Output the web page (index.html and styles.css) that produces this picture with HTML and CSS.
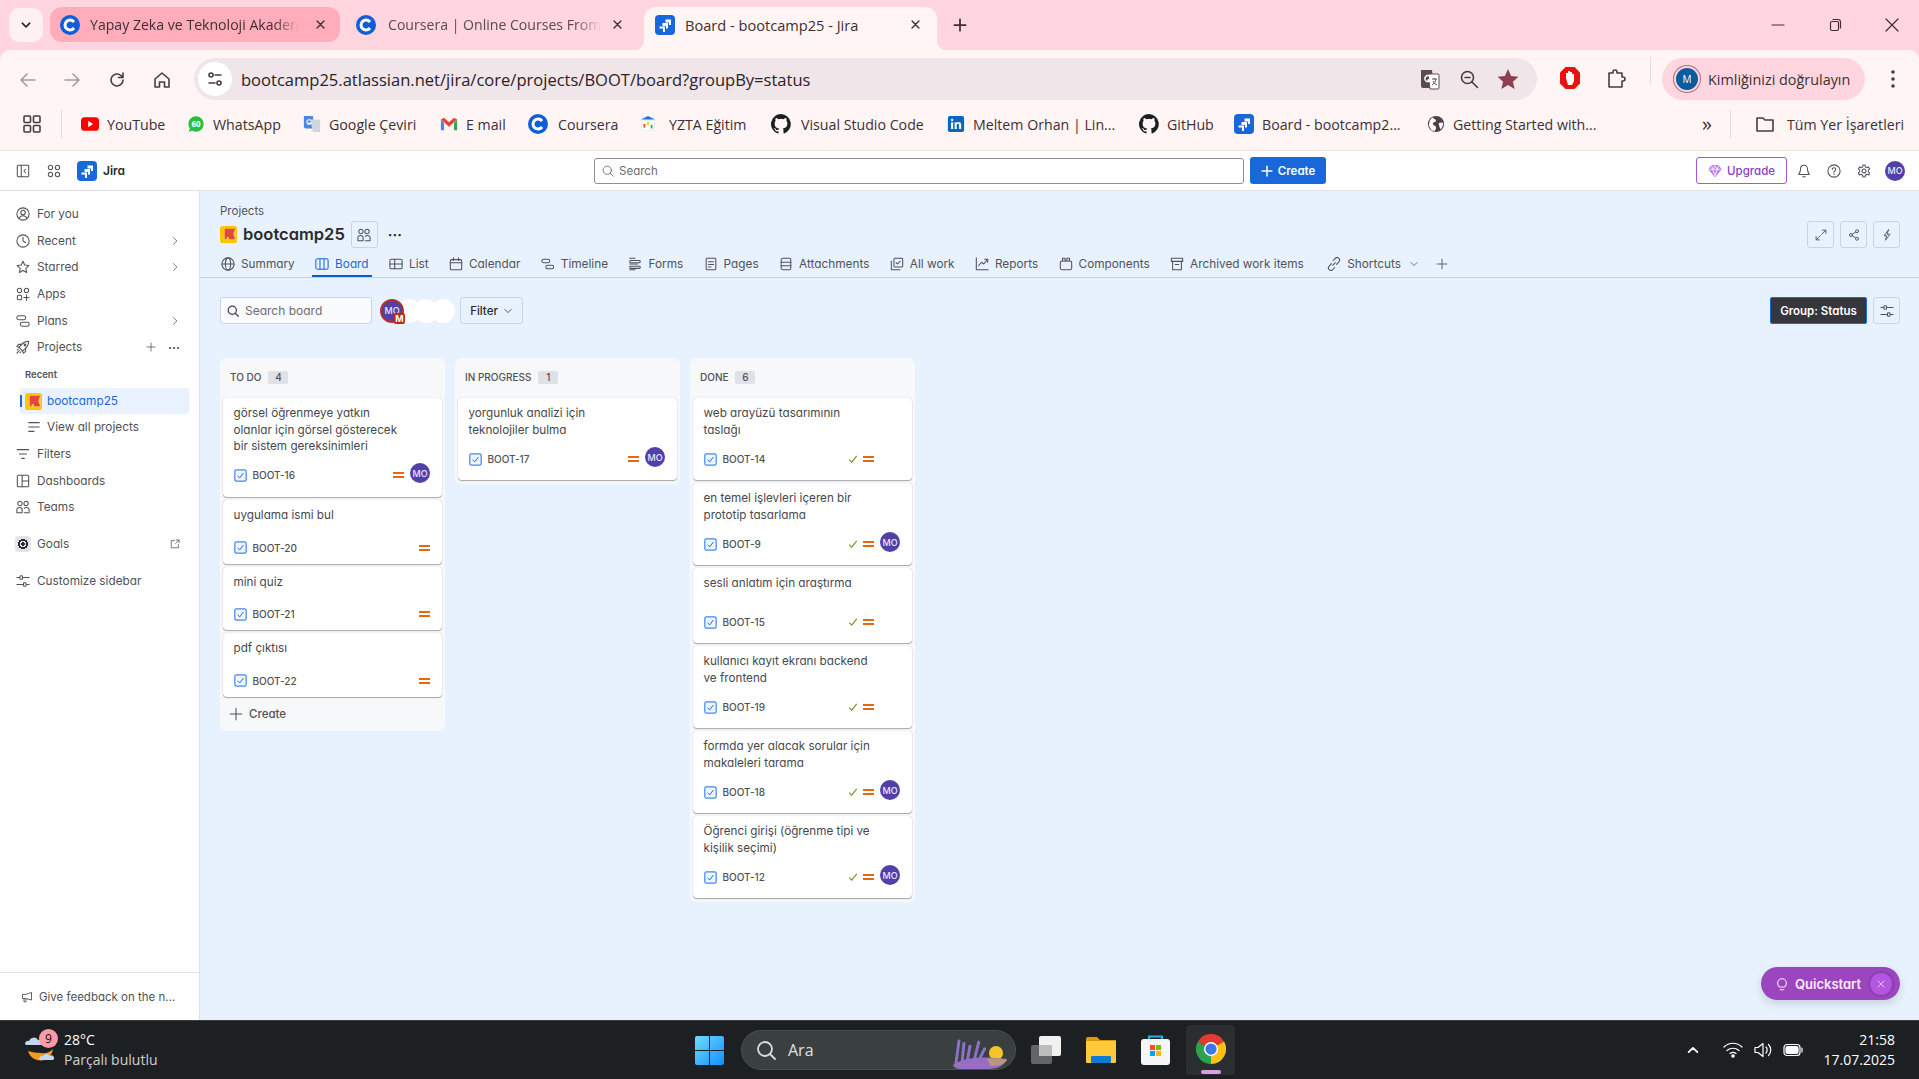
FILE: index.html
```html
<!DOCTYPE html>
<html lang="tr">
<head>
<meta charset="utf-8">
<title>Board - bootcamp25 - Jira</title>
<link rel="stylesheet" href="styles.css">
</head>
<body>
<svg class="defs" width="0" height="0" aria-hidden="true">
  <defs>
    <symbol id="i-user" viewBox="0 0 16 16"><circle cx="8" cy="8" r="7"/><circle cx="8" cy="6.3" r="2.6"/><path d="M3.6 13c.8-2.2 2.4-3 4.4-3s3.6.8 4.4 3"/></symbol>
    <symbol id="i-clock" viewBox="0 0 16 16"><circle cx="8" cy="8" r="7"/><path d="M8 3.8V8l3 1.8"/></symbol>
    <symbol id="i-star" viewBox="0 0 16 16"><path d="M8 1.5l2 4.3 4.7.6-3.500 3.200.9 4.700L8 12l-4.100 2.300.9-4.700L1.300 6.400 6 5.800z"/></symbol>
    <symbol id="i-apps" viewBox="0 0 16 16"><rect x="1.5" y="1.5" width="5" height="5" rx="2.5"/><rect x="9.5" y="1.5" width="5" height="5" rx="2.5"/><rect x="1.5" y="9.5" width="5" height="5" rx="1.5"/><path d="M12 9v6M9 12h6"/></symbol>
    <symbol id="i-plans" viewBox="0 0 16 16"><rect x="1" y="2" width="10" height="4.500" rx="2"/><rect x="5" y="9.500" width="10" height="4.500" rx="2"/></symbol>
    <symbol id="i-rocket" viewBox="0 0 16 16"><path d="M5.5 10.500L3.500 8.500l3-3.500c2.200-2.500 5-3.500 8-3.500 0 3-1 5.800-3.500 8l-3.500 3z"/><path d="M6.500 5H3L1 7.500l2.500 1M11 9.500V13l-2.500 2-1-2.500M1 15l3-3M1.500 11.500l1-1M4.500 14.500l1-1"/><circle cx="10.3" cy="5.7" r="1"/></symbol>
    <symbol id="i-chev" viewBox="0 0 16 16"><path d="M5.5 2.500L11 8l-5.500 5.500"/></symbol>
    <symbol id="i-chevd" viewBox="0 0 16 16"><path d="M3 5.500l5 5 5-5"/></symbol>
    <symbol id="i-plus" viewBox="0 0 16 16"><path d="M8 1.500v13M1.500 8h13"/></symbol>
    <symbol id="i-lines" viewBox="0 0 16 16"><path d="M2 3h12M2 8h12M2 13h6"/></symbol>
    <symbol id="i-filter" viewBox="0 0 16 16"><path d="M1.500 3h13M4 8h8M6.500 13h3"/></symbol>
    <symbol id="i-dash" viewBox="0 0 16 16"><rect x="1.5" y="1.5" width="13" height="13" rx="1.5"/><path d="M7 1.500v13M7 8h7.500"/></symbol>
    <symbol id="i-team" viewBox="0 0 16 16"><circle cx="4.5" cy="4" r="2.5"/><circle cx="11.5" cy="4" r="2.5"/><path d="M1 14.500V11c0-1.500 1.200-2.500 3-2.500 1.500 0 3 1 3 2.500v3.500zM9.500 14.500h5.500V11c0-1.500-1.200-2.500-3-2.500-1 0-2 .4-2.500 1"/></symbol>
    <symbol id="i-ext" viewBox="0 0 16 16"><path d="M7 2.500H2v11.500h11.500V9M9 7l5.500-5.500M10 1.500h4.500V6"/></symbol>
    <symbol id="i-sliders" viewBox="0 0 16 16"><path d="M1 4h3M8.500 4H15M1 12h6.500M12 12h3"/><rect x="4.5" y="2" width="3" height="4" rx="1"/><rect x="8.5" y="10" width="3" height="4" rx="1"/></symbol>
    <symbol id="i-mega" viewBox="0 0 16 16"><path d="M14 2.500v9.500L6 10H2V4.500h4zM4 10v4.500h2.500V10.500"/></symbol>
    <symbol id="i-globe" viewBox="0 0 16 16"><circle cx="8" cy="8" r="7"/><ellipse cx="8" cy="8" rx="3" ry="7"/><path d="M1 8h14"/></symbol>
    <symbol id="i-board" viewBox="0 0 16 16"><rect x="1" y="2" width="14" height="12" rx="2"/><path d="M5.7 2v12M10.3 2v12"/></symbol>
    <symbol id="i-list" viewBox="0 0 16 16"><rect x="1" y="2.5" width="14" height="11" rx="1.5"/><path d="M1 8h14M6.500 2.500v11"/></symbol>
    <symbol id="i-cal" viewBox="0 0 16 16"><rect x="1.5" y="3" width="13" height="11.5" rx="1.5"/><path d="M1.500 6.500h13M5 1v3M11 1v3"/></symbol>
    <symbol id="i-time" viewBox="0 0 16 16"><rect x="1" y="2.5" width="9" height="4" rx="2"/><rect x="5.5" y="9.5" width="9" height="4" rx="2"/></symbol>
    <symbol id="i-forms" viewBox="0 0 16 16"><path d="M2 1.500h6M2 8h9M2 14.500h6"/><rect x="2" y="4" width="12" height="2.5" rx="1"/><rect x="2" y="10.5" width="12" height="2.5" rx="1"/></symbol>
    <symbol id="i-page" viewBox="0 0 16 16"><rect x="2.5" y="1.5" width="11" height="13" rx="1"/><path d="M5 5.500h6M5 8.500h6M5 11.500h3"/></symbol>
    <symbol id="i-attach" viewBox="0 0 16 16"><rect x="2.5" y="1.5" width="11" height="13" rx="2"/><path d="M2.500 6h11M2.500 10h11"/></symbol>
    <symbol id="i-work" viewBox="0 0 16 16"><rect x="4.5" y="1.5" width="10" height="10" rx="1"/><path d="M1.500 4.500v10h10M7 6.500l1.500 1.500 3-3"/></symbol>
    <symbol id="i-report" viewBox="0 0 16 16"><path d="M1.500 1v13.500H15M4 10l3.500-4 2.500 2 4.500-5.500M11 2.500h3.500V6"/></symbol>
    <symbol id="i-comp" viewBox="0 0 16 16"><rect x="1.5" y="4.5" width="13" height="10" rx="2"/><path d="M4 4.500V1.500h3v3M9 4.500V1.500h3v3"/></symbol>
    <symbol id="i-arch" viewBox="0 0 16 16"><rect x="1.5" y="1.5" width="13" height="3.5"/><path d="M3 5v9.500h10V5M6 8.500h4"/></symbol>
    <symbol id="i-link" viewBox="0 0 16 16"><path d="M6.500 9.500l3-3M5 7.500l-2.500 3a2.800 2.800 0 0 0 4 4L9 12M7 4l2.500-2.500a2.800 2.800 0 0 1 4 4L11 8.500"/></symbol>
    <symbol id="i-expand" viewBox="0 0 16 16"><path d="M9 7l5.500-5.500M10 1.500h4.500V6M7 9l-5.500 5.500M6 14.500H1.500V10"/></symbol>
    <symbol id="i-share" viewBox="0 0 16 16"><circle cx="12" cy="3" r="2"/><circle cx="4" cy="8" r="2"/><circle cx="12" cy="13" r="2"/><path d="M5.800 7l4.400-3M5.800 9l4.400 3"/></symbol>
    <symbol id="i-bolt" viewBox="0 0 16 16"><path d="M10 1L4 9h3.500L6 15l6-8H8.500z"/></symbol>
    <symbol id="i-search" viewBox="0 0 16 16"><circle cx="7" cy="7" r="5.5"/><path d="M11 11l4 4"/></symbol>
    <symbol id="i-bell" viewBox="0 0 16 16"><path d="M8 1.500c-2.700 0-4 2-4 4.500 0 3-1.500 5-2 6h12c-.5-1-2-3-2-6 0-2.500-1.300-4.500-4-4.500zM6.500 14.500h3"/></symbol>
    <symbol id="i-help" viewBox="0 0 16 16"><circle cx="8" cy="8" r="7"/><path d="M6 6.200c0-1.200 1-2 2-2s2 .8 2 1.900c0 1.600-2 1.600-2 3.300M8 11.200v.8"/></symbol>
    <symbol id="i-gear" viewBox="0 0 16 16"><circle cx="8" cy="8" r="2.3"/><path d="M6.800 1.200h2.400l.4 2 1.800 1 1.900-.7 1.200 2.100-1.500 1.300v2.200l1.500 1.300-1.200 2.100-1.900-.7-1.800 1-.4 2H6.800l-.4-2-1.800-1-1.900.7-1.200-2.100 1.500-1.300V6.900L1.500 5.600l1.200-2.100 1.900.7 1.800-1z"/></symbol>
    <symbol id="i-panel" viewBox="0 0 16 16"><rect x="1.5" y="1.5" width="13" height="13" rx="1"/><path d="M6 1.500v13M11 6l-2 2 2 2"/></symbol>
    <symbol id="i-grid" viewBox="0 0 16 16"><circle cx="4" cy="4" r="2.5"/><circle cx="12" cy="4" r="2.5"/><circle cx="4" cy="12" r="2.5"/><circle cx="12" cy="12" r="2.5"/></symbol>
    <symbol id="i-tick" viewBox="0 0 16 16"><path d="M2 9l4 4 8-10"/></symbol>
    <symbol id="i-x" viewBox="0 0 16 16"><path d="M3 3l10 10M13 3L3 13"/></symbol>
    <symbol id="i-task" viewBox="0 0 16 16"><rect x="1" y="1" width="14" height="14" rx="2" fill="#eef5ff" stroke="#4688ec" stroke-width="1.5"/><path d="M4.500 8.300l2.500 2.700 4.500-6" fill="none" stroke="#1868db" stroke-width="1.2"/></symbol>
    <symbol id="logo-jira" viewBox="0 0 20 20"><rect width="20" height="20" rx="4" fill="#1868db"/><path d="M10.500 4.500H16v5.500h-2V7.500h-3.500zM7.500 8H13v5.500h-2V11H7.500zM4.500 11.500H10V17H8v-3.500H4.500z" fill="#fff"/></symbol>
    <symbol id="logo-c" viewBox="0 0 20 20"><circle cx="10" cy="10" r="10" fill="#0f5ed7"/><path d="M14 7a5 5 0 1 0 0 6" fill="none" stroke="#fff" stroke-width="3"/></symbol>
    <symbol id="logo-proj" viewBox="0 0 18 18"><rect width="18" height="18" rx="3" fill="#ffc400"/><rect x="4" y="3" width="13" height="12" fill="#f5cd47"/><path d="M5 3h11l-2 5.500 2 5.500H9.500v-2H7v2H5z" fill="#e2483d"/></symbol>
    <symbol id="logo-gh" viewBox="0 0 16 16"><path fill="#1b1f23" d="M8 0a8 8 0 0 0-2.500 15.600c.4.100.5-.2.500-.4v-1.400c-2.200.5-2.700-1-2.700-1-.4-.9-.9-1.200-.9-1.200-.7-.5.100-.5.100-.5.800.1 1.200.8 1.200.8.700 1.200 1.900.9 2.300.7.100-.5.300-.9.500-1.100-1.800-.2-3.600-.9-3.600-4 0-.9.300-1.600.8-2.100-.1-.2-.4-1 .1-2.100 0 0 .7-.2 2.200.8a7.600 7.600 0 0 1 4 0c1.500-1 2.200-.8 2.200-.8.400 1.100.2 1.900.1 2.100.5.600.8 1.300.8 2.100 0 3.100-1.900 3.700-3.700 3.900.3.300.6.800.6 1.500v2.200c0 .2.100.5.600.4A8 8 0 0 0 8 0z"/></symbol>
  </defs>
</svg>

<header class="chrome">
  <div class="tabstrip">
    <button class="tab-menu"><svg class="ic ic-12 ic-b2"><use href="#i-chevd"/></svg></button>
    <div class="tab tab-pink"><svg class="fav"><use href="#logo-c"/></svg><span class="tab-label">Yapay Zeka ve Teknoloji Akaden</span><svg class="ic ic-11 ic-b2 tab-x"><use href="#i-x"/></svg></div>
    <div class="tab tab-plain"><svg class="fav"><use href="#logo-c"/></svg><span class="tab-label">Coursera | Online Courses From</span><svg class="ic ic-11 ic-b2 tab-x"><use href="#i-x"/></svg></div>
    <div class="tab tab-active"><svg class="fav"><use href="#logo-jira"/></svg><span class="tab-title">Board - bootcamp25 - Jira</span><svg class="ic ic-11 ic-b2 tab-x"><use href="#i-x"/></svg></div>
    <svg class="ic ic-14 ic-b2 new-tab"><use href="#i-plus"/></svg>
    <div class="win-ctrls">
      <svg class="ic ic-14" viewBox="0 0 14 14"><path d="M1 7h12"/></svg>
      <svg class="ic ic-14" viewBox="0 0 14 14"><rect x="2.5" y="3.5" width="8" height="9" rx="1.5"/><path d="M5 1.500h5c1.500 0 2.500 1 2.500 2.500v6"/></svg>
      <svg class="ic ic-14" viewBox="0 0 14 14"><path d="M1 1l12 12M13 1L1 13"/></svg>
    </div>
  </div>
  <div class="toolbar">
    <div class="addr-row">
      <svg class="ic ic-18 ic-faded nav-btn" viewBox="0 0 18 18"><path d="M16 9H2M8 3L2 9l6 6"/></svg>
      <svg class="ic ic-18 ic-faded nav-btn" viewBox="0 0 18 18"><path d="M2 9h14M10 3l6 6-6 6"/></svg>
      <svg class="ic ic-18 ic-dark nav-btn" viewBox="0 0 18 18"><path d="M15 9a6 6 0 1 1-2-4.500L15 6.500M15 2v4.500h-4.500"/></svg>
      <svg class="ic ic-18 ic-dark nav-btn" viewBox="0 0 18 18"><path d="M2 8l7-6 7 6v8h-4.500v-5h-5v5H2z"/></svg>
      <div class="omnibox">
        <span class="site-chip"><svg class="ic ic-16 ic-dark" viewBox="0 0 16 16"><circle cx="4" cy="4" r="2"/><path d="M8 4h6M2 12h6"/><circle cx="12" cy="12" r="2"/></svg></span>
        <span class="url">bootcamp25.atlassian.net/jira/core/projects/BOOT/board?groupBy=status</span>
        <span class="omni-right">
          <svg class="omni-ic" viewBox="0 0 22 22"><path d="M2 2h11l2 18H4a2 2 0 0 1-2-2z" fill="#5b4a4e"/><path d="M9 6h10a1 1 0 0 1 1 1v13a1 1 0 0 1-1 1H11z" fill="#fff" stroke="#5b4a4e"/><path d="M11 8.500a3 3 0 1 0 .5 3.500H8.500" fill="none" stroke="#fff" stroke-width="1.5"/><path d="M13 11h5M15.500 10v1M17 11c-.5 3-2 5-4 6M14 13c.8 2 2.300 3 4 4" fill="none" stroke="#5b4a4e"/></svg>
          <svg class="ic ic-20 ic-dark" viewBox="0 0 20 20"><circle cx="8.5" cy="8.5" r="6"/><path d="M13 13l5.500 5.500M6 8.500h5"/></svg>
          <svg class="omni-star" viewBox="0 0 20 20"><path d="M10 1l2.800 6.300 6.700.6-5 4.500 1.500 6.600-6-3.500-6 3.500 1.500-6.600-5-4.500 6.700-.6z" fill="#8e3f50"/></svg>
        </span>
      </div>
      <svg class="ext-stop" viewBox="0 0 22 24"><path d="M6.500 1h9L21 6.500v11L15.500 23h-9L1 17.500v-11z" fill="#e8120e"/><path d="M7 12V7h2v4-6h2v6-5h2v5-3h2v7l-2 4H9z" fill="#fff"/></svg>
      <svg class="ic ic-20 ic-dark ext-puzzle" viewBox="0 0 20 20"><path d="M3 4h4V3a2 2 0 0 1 4 0v1h5v4h1a2 2 0 0 1 0 4h-1v6H3z"/></svg>
      <span class="vsep vsep-a"></span>
      <div class="profile"><span class="profile-av">M</span><span>Kimliğinizi doğrulayın</span></div>
      <svg class="kebab" viewBox="0 0 4 18"><circle cx="2" cy="2" r="1.8"/><circle cx="2" cy="9" r="1.8"/><circle cx="2" cy="16" r="1.8"/></svg>
    </div>
    <nav class="bookmarks">
      <svg class="ic ic-18 ic-dark bm-apps" viewBox="0 0 18 18"><rect x="1" y="1" width="6.5" height="6.5" rx="1"/><rect x="10.5" y="1" width="6.5" height="6.5" rx="1"/><rect x="1" y="10.5" width="6.5" height="6.5" rx="1"/><rect x="10.5" y="10.5" width="6.5" height="6.5" rx="1"/></svg>
      <span class="vsep bm-sep"></span>
      <a class="bm bm-yt"><svg class="fav-s" viewBox="0 0 20 20"><rect y="2.5" width="20" height="15" rx="4" fill="#f00"/><path d="M8 6.500l5.500 3.500L8 13.500z" fill="#fff"/></svg>YouTube</a>
      <a class="bm bm-wa"><svg class="fav-s" viewBox="0 0 20 20"><circle cx="10" cy="10" r="8.5" fill="#25c03f"/><path d="M2 19l1.500-5 3 3z" fill="#25c03f"/></svg><span class="wa-60">60</span>WhatsApp</a>
      <a class="bm bm-gt"><svg class="fav-s" viewBox="0 0 20 20"><path d="M1 1h10l2 14H3a2 2 0 0 1-2-2z" fill="#4a86e8"/><path d="M8 5h10a1 1 0 0 1 1 1v12a1 1 0 0 1-1 1h-7z" fill="#cfd8dc"/><path d="M8.500 6a2.500 2.500 0 1 0 .5 3H6" fill="none" stroke="#fff" stroke-width="1.2"/></svg>Google Çeviri</a>
      <a class="bm bm-gm"><svg class="fav-s" viewBox="0 0 20 20"><path d="M1 5v12h3.500V9z" fill="#4285f4"/><path d="M19 5v12h-3.500V9z" fill="#34a853"/><path d="M1 5l3.500-2L10 8l5.500-5L19 5l-9 8z" fill="#ea4335"/></svg>E mail</a>
      <a class="bm bm-co"><svg class="fav-l"><use href="#logo-c"/></svg>Coursera</a>
      <a class="bm bm-yz"><svg class="fav-s" viewBox="0 0 20 20"><path d="M10 1l8 4H2z" fill="#1a73e8"/><rect x="3" y="6" width="14" height="11" fill="#fff" stroke="#e8eaed"/><rect x="5" y="10" width="2" height="4" fill="#ea4335"/><rect x="9" y="8" width="2" height="3" fill="#fbbc04"/><rect x="13" y="11" width="2" height="4" fill="#34a853"/></svg>YZTA Eğitim</a>
      <a class="bm bm-vs"><svg class="fav-l"><use href="#logo-gh"/></svg>Visual Studio Code</a>
      <a class="bm bm-li"><svg class="fav-s" viewBox="0 0 20 20"><rect x="1" y="1" width="18" height="18" rx="2" fill="#0a66c2"/><path d="M4.500 8h2.300v7.500H4.500zM4.400 5.500a1.300 1.300 0 1 1 2.600 0 1.300 1.300 0 0 1-2.600 0zM8.500 8h2.200v1c.5-.8 1.300-1.200 2.300-1.200 2 0 2.700 1.300 2.700 3.300v4.400h-2.300v-4c0-1-.3-1.700-1.200-1.700-1 0-1.400.7-1.400 1.700v4H8.500z" fill="#fff"/></svg>Meltem Orhan | Lin...</a>
      <a class="bm bm-gh"><svg class="fav-l"><use href="#logo-gh"/></svg>GitHub</a>
      <a class="bm bm-bo"><svg class="fav-l"><use href="#logo-jira"/></svg>Board - bootcamp2...</a>
      <a class="bm bm-gs"><svg class="fav-s" viewBox="0 0 20 20"><circle cx="10" cy="10" r="9" fill="#4a4046"/><path d="M6 2.500c1 2 3.500 1.500 4 3.500s-3 1.500-3.500 3.500 3 2 3.500 4-1 3-1.500 4.500L5 17 2 12l1-6zM13 9c2-1 4-1 5 0 0 3-1 5-3 7-1-2-2-5-2-7z" fill="#fff5f5"/></svg>Getting Started with...</a>
      <span class="bm-more">»</span>
      <span class="vsep bm-sep2"></span>
      <a class="bm bm-all"><svg class="ic ic-20 ic-dark" viewBox="0 0 20 20"><path d="M2 4h6l2 2h8v11H2z"/></svg>Tüm Yer İşaretleri</a>
    </nav>
  </div>
</header>

<div class="jira">
  <div class="topnav">
    <svg class="ic ic-14 tn-panel"><use href="#i-panel"/></svg>
    <svg class="ic ic-14 tn-grid"><use href="#i-grid"/></svg>
    <svg class="jira-logo"><use href="#logo-jira"/></svg>
    <span class="jira-word">Jira</span>
    <div class="global-search"><svg class="ic ic-12"><use href="#i-search"/></svg><span>Search</span></div>
    <button class="create-btn"><svg class="ic ic-12 ic-white ic-b2"><use href="#i-plus"/></svg>Create</button>
    <button class="upgrade-btn"><svg class="gem" viewBox="0 0 16 16"><path d="M4 2h8l3 4-7 8.500L1 6z" fill="#c58af0" stroke="#af59e1"/><path d="M1 6h14M5.500 6L8 14l2.500-8M4 2l1.500 4L8 2l2.500 4L12 2" fill="none" stroke="#fff" stroke-width=".8"/></svg>Upgrade</button>
    <svg class="ic ic-14 tn-i tn-bell"><use href="#i-bell"/></svg>
    <svg class="ic ic-14 tn-i"><use href="#i-help"/></svg>
    <svg class="ic ic-14 tn-i"><use href="#i-gear"/></svg>
    <span class="avatar tn-av">MO</span>
  </div>

  <div class="workspace">
    <aside class="sidebar">
      <a class="side-item"><svg class="ic ic-14"><use href="#i-user"/></svg><span class="side-text">For you</span></a>
      <a class="side-item"><svg class="ic ic-14"><use href="#i-clock"/></svg><span class="side-text">Recent</span><svg class="ic ic-10 side-chev"><use href="#i-chev"/></svg></a>
      <a class="side-item"><svg class="ic ic-14"><use href="#i-star"/></svg><span class="side-text">Starred</span><svg class="ic ic-10 side-chev"><use href="#i-chev"/></svg></a>
      <a class="side-item"><svg class="ic ic-14"><use href="#i-apps"/></svg><span class="side-text">Apps</span></a>
      <a class="side-item"><svg class="ic ic-14"><use href="#i-plans"/></svg><span class="side-text">Plans</span><svg class="ic ic-10 side-chev"><use href="#i-chev"/></svg></a>
      <a class="side-item"><svg class="ic ic-14"><use href="#i-rocket"/></svg><span class="side-text">Projects</span><svg class="ic ic-10 side-plus"><use href="#i-plus"/></svg><span class="side-dots">···</span></a>
      <div class="side-label">Recent</div>
      <a class="side-project"><svg class="proj-ic"><use href="#logo-proj"/></svg><span>bootcamp25</span></a>
      <a class="side-item side-sub"><svg class="ic ic-14"><use href="#i-lines"/></svg><span class="side-text">View all projects</span></a>
      <a class="side-item"><svg class="ic ic-14"><use href="#i-filter"/></svg><span class="side-text">Filters</span></a>
      <a class="side-item"><svg class="ic ic-14"><use href="#i-dash"/></svg><span class="side-text">Dashboards</span></a>
      <a class="side-item"><svg class="ic ic-14"><use href="#i-team"/></svg><span class="side-text">Teams</span></a>
      <a class="side-item side-gap"><span class="goal-ic"></span><span class="side-text">Goals</span><svg class="ic ic-10 side-ext"><use href="#i-ext"/></svg></a>
      <a class="side-item side-gap"><svg class="ic ic-14"><use href="#i-sliders"/></svg><span class="side-text">Customize sidebar</span></a>
      <div class="side-feedback"><svg class="ic ic-12"><use href="#i-mega"/></svg><span>Give feedback on the n...</span></div>
    </aside>

    <main class="main">
      <div class="crumb">Projects</div>
      <div class="title-row">
        <svg class="title-ic"><use href="#logo-proj"/></svg>
        <h1 class="title">bootcamp25</h1>
        <button class="sq-btn"><svg class="ic ic-14"><use href="#i-team"/></svg></button>
        <span class="title-dots">···</span>
        <div class="title-actions">
          <button class="sq-btn sq-narrow"><svg class="ic ic-12"><use href="#i-expand"/></svg></button>
          <button class="sq-btn sq-narrow"><svg class="ic ic-12"><use href="#i-share"/></svg></button>
          <button class="sq-btn sq-narrow"><svg class="ic ic-12"><use href="#i-bolt"/></svg></button>
        </div>
      </div>
      <nav class="tabs">
        <a class="jtab"><svg class="ic ic-14"><use href="#i-globe"/></svg>Summary</a>
        <a class="jtab jtab-on"><svg class="ic ic-14"><use href="#i-board"/></svg>Board</a>
        <a class="jtab"><svg class="ic ic-14"><use href="#i-list"/></svg>List</a>
        <a class="jtab"><svg class="ic ic-14"><use href="#i-cal"/></svg>Calendar</a>
        <a class="jtab"><svg class="ic ic-14"><use href="#i-time"/></svg>Timeline</a>
        <a class="jtab"><svg class="ic ic-14"><use href="#i-forms"/></svg>Forms</a>
        <a class="jtab"><svg class="ic ic-14"><use href="#i-page"/></svg>Pages</a>
        <a class="jtab"><svg class="ic ic-14"><use href="#i-attach"/></svg>Attachments</a>
        <a class="jtab"><svg class="ic ic-14"><use href="#i-work"/></svg>All work</a>
        <a class="jtab"><svg class="ic ic-14"><use href="#i-report"/></svg>Reports</a>
        <a class="jtab"><svg class="ic ic-14"><use href="#i-comp"/></svg>Components</a>
        <a class="jtab"><svg class="ic ic-14"><use href="#i-arch"/></svg>Archived work items</a>
        <a class="jtab jtab-short"><svg class="ic ic-14"><use href="#i-link"/></svg>Shortcuts<svg class="ic ic-10 short-chev"><use href="#i-chevd"/></svg></a>
        <svg class="ic ic-12 tab-add"><use href="#i-plus"/></svg>
      </nav>

      <div class="board-tools">
        <div class="board-search"><svg class="ic ic-12 ic-dark"><use href="#i-search"/></svg><span>Search board</span></div>
        <div class="assignees">
          <span class="av-ring">MO<span class="av-m">M</span></span>
          <span class="av-blank"></span><span class="av-blank"></span><span class="av-blank"></span>
        </div>
        <button class="filter-btn">Filter<svg class="ic ic-10"><use href="#i-chevd"/></svg></button>
        <button class="group-btn">Group: Status</button>
        <button class="sq-btn sq-narrow sq-tool"><svg class="ic ic-14"><use href="#i-sliders"/></svg></button>
      </div>

      <section class="board">
        <div class="col">
          <div class="col-head"><span>TO DO</span><span class="count">4</span></div>
          <div class="cards">
            <article class="card card-3l"><p class="card-title">görsel öğrenmeye yatkın<br>olanlar için görsel gösterecek<br>bir sistem gereksinimleri</p><div class="card-foot"><svg class="task"><use href="#i-task"/></svg><span class="key">BOOT-16</span><i class="prio"></i><span class="avatar">MO</span></div></article>
            <article class="card card-1l"><p class="card-title">uygulama ismi bul</p><div class="card-foot"><svg class="task"><use href="#i-task"/></svg><span class="key">BOOT-20</span><i class="prio"></i></div></article>
            <article class="card card-1l"><p class="card-title">mini quiz</p><div class="card-foot"><svg class="task"><use href="#i-task"/></svg><span class="key">BOOT-21</span><i class="prio"></i></div></article>
            <article class="card card-1l"><p class="card-title">pdf çıktısı</p><div class="card-foot"><svg class="task"><use href="#i-task"/></svg><span class="key">BOOT-22</span><i class="prio"></i></div></article>
          </div>
          <div class="col-create"><svg class="ic ic-14"><use href="#i-plus"/></svg>Create</div>
        </div>
        <div class="col">
          <div class="col-head"><span>IN PROGRESS</span><span class="count">1</span></div>
          <div class="cards">
            <article class="card card-2l"><p class="card-title">yorgunluk analizi için<br>teknolojiler bulma</p><div class="card-foot"><svg class="task"><use href="#i-task"/></svg><span class="key">BOOT-17</span><i class="prio"></i><span class="avatar">MO</span></div></article>
          </div>
        </div>
        <div class="col">
          <div class="col-head"><span>DONE</span><span class="count">6</span></div>
          <div class="cards">
            <article class="card card-2l"><p class="card-title">web arayüzü tasarımının<br>taslağı</p><div class="card-foot"><svg class="task"><use href="#i-task"/></svg><span class="key">BOOT-14</span><svg class="done"><use href="#i-tick"/></svg><i class="prio prio-d"></i><span class="avatar avatar-none"></span></div></article>
            <article class="card card-2l"><p class="card-title">en temel işlevleri içeren bir<br>prototip tasarlama</p><div class="card-foot"><svg class="task"><use href="#i-task"/></svg><span class="key">BOOT-9</span><svg class="done"><use href="#i-tick"/></svg><i class="prio prio-d"></i><span class="avatar">MO</span></div></article>
            <article class="card card-1t"><p class="card-title">sesli anlatım için araştırma</p><div class="card-foot"><svg class="task"><use href="#i-task"/></svg><span class="key">BOOT-15</span><svg class="done"><use href="#i-tick"/></svg><i class="prio prio-d"></i><span class="avatar avatar-none"></span></div></article>
            <article class="card card-2l"><p class="card-title">kullanıcı kayıt ekranı backend<br>ve frontend</p><div class="card-foot"><svg class="task"><use href="#i-task"/></svg><span class="key">BOOT-19</span><svg class="done"><use href="#i-tick"/></svg><i class="prio prio-d"></i><span class="avatar avatar-none"></span></div></article>
            <article class="card card-2l"><p class="card-title">formda yer alacak sorular için<br>makaleleri tarama</p><div class="card-foot"><svg class="task"><use href="#i-task"/></svg><span class="key">BOOT-18</span><svg class="done"><use href="#i-tick"/></svg><i class="prio prio-d"></i><span class="avatar">MO</span></div></article>
            <article class="card card-2l"><p class="card-title">Öğrenci girişi (öğrenme tipi ve<br>kişilik seçimi)</p><div class="card-foot"><svg class="task"><use href="#i-task"/></svg><span class="key">BOOT-12</span><svg class="done"><use href="#i-tick"/></svg><i class="prio prio-d"></i><span class="avatar">MO</span></div></article>
          </div>
        </div>
      </section>

      <div class="quickstart">
        <svg class="ic ic-14 ic-qs" viewBox="0 0 14 16"><path d="M4.500 11.500C3 10.500 2 9 2 7a5 5 0 0 1 10 0c0 2-1 3.500-2.500 4.500zM5 14.500h4"/></svg>
        <span>Quickstart</span>
        <span class="qs-close"><svg class="ic ic-10 ic-qs"><use href="#i-x"/></svg></span>
      </div>
    </main>
  </div>
</div>

<footer class="taskbar">
  <div class="tb-left">
    <div class="weather">
      <svg class="weather-ic" viewBox="0 0 32 42"><path d="M3 22c2 7 9 11 16 9 5-1 8-5 9-11-3 3-7 5-12 4-5 0-9-1-13-2z" fill="#f29a1f"/><path d="M0 15a3 3 0 0 1 4-3 5 5 0 0 1 9-1 3 3 0 0 1 3 5H2a2 2 0 0 1-2-1z" fill="#c4d6f3"/><path d="M14 30a3 3 0 0 1 4-3 4 4 0 0 1 7 0 2.500 2.500 0 0 1 3 4H16a2.500 2.500 0 0 1-2-1z" fill="#c4d6f3"/></svg>
      <span class="weather-badge">9</span>
    </div>
    <div class="weather-text"><span>28°C</span><span class="weather-sub">Parçalı bulutlu</span></div>
  </div>
  <div class="tb-center">
    <svg class="win-logo" viewBox="0 0 29 29"><defs><linearGradient id="wg" x1="0" y1="0" x2="1" y2="1"><stop offset="0" stop-color="#6fdcfb"/><stop offset="1" stop-color="#0f8fff"/></linearGradient></defs><path d="M0 2a2 2 0 0 1 2-2h12v14H0zM15 0h12a2 2 0 0 1 2 2v12H15zM0 15h14v14H2a2 2 0 0 1-2-2zM15 15h14v12a2 2 0 0 1-2 2H15z" fill="url(#wg)"/></svg>
    <div class="tb-search">
      <svg class="ic ic-20 ic-tb" viewBox="0 0 20 20"><circle cx="9" cy="9" r="7"/><path d="M14 14l5 5"/></svg>
      <span>Ara</span>
      <svg class="lavender" viewBox="0 0 54 34"><circle cx="43" cy="18" r="7" fill="#f7c32a"/><path d="M0 30c10-8 30-9 54-6-4 8-10 10-20 10H8c-4 0-7-1-8-4z" fill="#9a6dc0"/><path d="M34 24c8-1 14-1 20 1-3 5-10 6-16 6z" fill="#b39a7e"/><path d="M3 28L6 6M9 28l2-20M14 27l3-16M21 26l5-20M26 25l6-12" stroke="#8e72c9" stroke-width="3" stroke-linecap="round" stroke-dasharray="2 1.500" fill="none"/></svg>
    </div>
    <svg class="tb-app tb-view" viewBox="0 0 30 28"><rect x="0" y="9" width="21" height="19" rx="2" fill="#626566"/><rect x="8" y="0" width="22" height="20" rx="2" fill="#f1f1f1"/><rect x="8" y="9" width="13" height="11" fill="#bdbdbd"/></svg>
    <svg class="tb-app tb-files" viewBox="0 0 30 26"><path d="M0 2a2 2 0 0 1 2-2h9l3 3h16v4H0z" fill="#dd9b0c"/><rect y="4" width="30" height="22" rx="1" fill="#fec93b"/><rect x="5" y="19" width="20" height="7" rx="1" fill="#0b7ccf"/></svg>
    <svg class="tb-app tb-store" viewBox="0 0 29 30"><path d="M8 4V1.500h13V4" fill="none" stroke="#28b0e6" stroke-width="2"/><rect y="4" width="29" height="26" rx="3" fill="#f5f5f5"/><rect x="9" y="10" width="5" height="5" fill="#f25022"/><rect x="15" y="10" width="5" height="5" fill="#7fba00"/><rect x="9" y="16" width="5" height="5" fill="#00a4ef"/><rect x="15" y="16" width="5" height="5" fill="#ffb900"/></svg>
    <div class="tb-chrome">
      <svg class="chrome-logo" viewBox="0 0 32 32"><path d="M16 16L2.100 8A16 16 0 0 1 29.900 8z" fill="#e33b2e"/><path d="M16 16L29.900 8A16 16 0 0 1 16 32z" fill="#fbc116"/><path d="M16 16L16 32A16 16 0 0 1 2.100 8z" fill="#2ba24c"/><circle cx="16" cy="16" r="7.5" fill="#fff"/><circle cx="16" cy="16" r="6" fill="#3b78e7"/></svg>
      <span class="chrome-ind"></span>
    </div>
  </div>
  <div class="tb-right">
    <svg class="ic ic-14 ic-tbw ic-b2 tray-up"><use href="#i-chevd"/></svg>
    <svg class="ic ic-20 ic-tbw tray" viewBox="0 0 20 20"><path d="M1 7c5-5 13-5 18 0M4 10.500c3.500-3 8.500-3 12 0M7 13.500c2-1.500 4-1.500 6 0"/><circle cx="10" cy="16" r="1.2" fill="#fff"/></svg>
    <svg class="ic ic-20 ic-tbw tray" viewBox="0 0 20 20"><path d="M2 7.500v5h3l5 4v-13l-5 4zM13 7c1.500 1.500 1.500 4.500 0 6M15.500 4.500c3 3 3 8 0 11"/></svg>
    <svg class="ic ic-20 ic-tbw tray" viewBox="0 0 20 14"><rect x="1" y="1.5" width="16" height="11" rx="3"/><rect x="3" y="3.5" width="12" height="7" rx="1.5" fill="#fff"/><path d="M19 5v4"/></svg>
    <div class="clock"><span>21:58</span><span>17.07.2025</span></div>
  </div>
</footer>
</body>
</html>
```
FILE: styles.css
```css
* { box-sizing: border-box; }
html, body { margin: 0; padding: 0; }
body {
  width: 1919px; height: 1079px; overflow: hidden;
  display: flex; flex-direction: column;
  font-family: "Open Sans", "Noto Sans", sans-serif;
  background: #ffd6df;
}
.defs { position: absolute; }
button { font: inherit; border: 0; padding: 0; background: none; }
h1, p { margin: 0; }
.ic { fill: none; stroke: currentColor; stroke-width: 1.2; stroke-linecap: round; stroke-linejoin: round; flex: none; }
.ic-10 { width: 10px; height: 10px; }
.ic-11 { width: 11px; height: 11px; }
.ic-12 { width: 12px; height: 12px; }
.ic-14 { width: 14px; height: 14px; }
.ic-16 { width: 16px; height: 16px; }
.ic-18 { width: 18px; height: 18px; }
.ic-20 { width: 20px; height: 20px; }
.ic-b2 { stroke-width: 2; }
.ic-white { color: #fff; }
.ic-dark { color: #4a3b3f; stroke-width: 1.6; }
.ic-faded { color: #a89a9d; stroke-width: 1.6; }

/* browser chrome */
.chrome { height: 151px; flex: none; display: flex; flex-direction: column; color: #3e2f33; }
.tabstrip { height: 50px; display: flex; align-items: flex-end; padding-left: 9px; }
.tab-menu { width: 34px; height: 34px; margin-bottom: 8px; border-radius: 10px; background: #fff0f2; display: flex; align-items: center; justify-content: center; color: #2b2023; }
.tab { display: flex; align-items: center; font-size: 14.6px; position: relative; }
.fav { width: 20px; height: 20px; flex: none; }
.tab-label { white-space: nowrap; flex: none; margin-left: 10px; font-size: 14.1px; -webkit-mask-image: linear-gradient(90deg, #000 88%, transparent); mask-image: linear-gradient(90deg, #000 88%, transparent); }
.tab-title { white-space: nowrap; flex: none; margin-left: 10px; }
.tab-x { margin-left: auto; color: #3e2f33; }
.tab-pink { width: 290px; height: 35px; margin: 0 0 8px 7px; padding: 0 14px 0 10px; border-radius: 12px; background: #ffadbb; }
.tab-plain { width: 304px; height: 35px; margin-bottom: 8px; padding: 0 21px 0 16px; color: #5a4a4e; }
.tab-plain .tab-label { margin-left: 12px; }
.tab-active { width: 293px; height: 43px; padding: 0 16px 8px 11px; background: #fff5f5; border-radius: 12px 12px 0 0; }
.tab-active::before, .tab-active::after { content: ""; position: absolute; bottom: 0; width: 10px; height: 10px; }
.tab-active::before { left: -10px; background: radial-gradient(circle at 0 0, transparent 10px, #fff5f5 10.5px); }
.tab-active::after { right: -10px; background: radial-gradient(circle at 100% 0, transparent 10px, #fff5f5 10.5px); }
.new-tab { margin: 0 0 18px 16px; color: #3e2f33; }
.win-ctrls { margin-left: auto; display: flex; gap: 43px; padding-right: 20px; align-self: center; color: #3e2f33; }
.toolbar { flex: 1; background: #fff5f5; border-bottom: 1px solid #f5dde0; border-radius: 10px 10px 0 0; }
.addr-row { height: 50px; display: flex; align-items: flex-end; padding-left: 19px; }
.nav-btn { margin: 0 26px 11px 0; }
.nav-btn:nth-child(2), .nav-btn:nth-child(3) { margin-right: 27px; }
.nav-btn:nth-child(4) { margin-right: 23px; }
.omnibox { width: 1343px; height: 42px; border-radius: 21px; background: #f0e6ea; display: flex; align-items: center; padding-left: 4px; }
.site-chip { width: 34px; height: 34px; border-radius: 50%; background: #fff; display: flex; align-items: center; justify-content: center; }
.url { margin-left: 9px; font-size: 16.55px; color: #2c2225; white-space: nowrap; }
.omni-right { margin-left: auto; display: flex; align-items: center; gap: 18px; padding-right: 18px; }
.omni-ic { width: 22px; height: 22px; }
.omni-star { width: 22px; height: 22px; }
.ext-stop { width: 22px; height: 24px; margin: 0 0 10px 22px; flex: none; }
.ext-puzzle { margin: 0 0 11px 25px; }
.vsep { width: 1px; background: #f2d5da; flex: none; }
.vsep-a { height: 28px; margin: 0 11px 15px 24px; }
.profile { width: 203px; height: 42px; border-radius: 21px; background: #ffd6df; display: flex; align-items: center; gap: 10px; padding-left: 14px; font-size: 14.4px; white-space: nowrap; }
.profile-av { width: 22px; height: 22px; border-radius: 50%; background: #0b5c9e; color: #fff; font-size: 10px; display: flex; align-items: center; justify-content: center; box-shadow: 0 0 0 2px #ffd6df, 0 0 0 3px #a9707f; flex: none; }
.kebab { width: 4px; height: 18px; margin: 0 0 12px 26px; fill: #4a3b3f; flex: none; }
.bookmarks { height: 48px; display: flex; align-items: center; font-size: 14.2px; position: relative; padding-left: 23px; }
.bm-apps { margin-right: 20px; }
.bm-sep { height: 28px; }
.bm { display: flex; align-items: center; gap: 8px; white-space: nowrap; color: #3e2f33; position: relative; }
.fav-s { width: 18px; height: 18px; flex: none; }
.fav-l { width: 20px; height: 20px; flex: none; }
.bm-yt { margin-left: 19px; width: 106px; }
.bm-wa { width: 116px; }
.bm-gt { width: 137px; }
.bm-gm { width: 88px; }
.bm-co { width: 112px; gap: 10px; }
.bm-yz { width: 132px; gap: 12px; margin-left: -1px; }
.bm-vs { width: 176px; gap: 10px; }
.bm-li { width: 192px; }
.bm-gh { width: 95px; gap: 8px; }
.bm-bo { width: 193px; gap: 8px; }
.bm-gs { width: 275px; }
.wa-60 { position: absolute; left: 3px; top: 3px; width: 12px; font-size: 8px; font-weight: 700; color: #fff; text-align: center; line-height: 12px; }
.bm-more { font-size: 20px; width: 28px; line-height: 1; }
.bm-sep2 { height: 28px; margin-right: 24px; }
.bm-all { gap: 12px; }

/* jira top */
.jira { flex: 1; min-height: 0; display: flex; flex-direction: column; font-family: Inter, "Noto Sans", sans-serif; font-feature-settings: "cv11"; color: #505258; background: #fff; }
.topnav { height: 40px; flex: none; display: flex; align-items: center; border-bottom: 1px solid #dfe1e6; padding-left: 16px; font-size: 11px; }
.tn-grid { margin-left: 17px; }
.jira-logo { width: 20px; height: 20px; margin-left: 16px; flex: none; }
.jira-word { margin-left: 6px; font-size: 12px; font-weight: 600; color: #292a2e; }
.global-search { width: 650px; height: 26px; margin-left: 469px; border: 1px solid #8c8f97; border-radius: 3px; display: flex; align-items: center; gap: 5px; padding-left: 7px; color: #6b6e76; font-size: 11.5px; }
.create-btn { width: 76px; height: 27px; margin-left: 6px; border-radius: 3px; background: #1868db; color: #fff; font-size: 11.5px; font-weight: 600; display: flex; align-items: center; justify-content: center; gap: 5px; }
.upgrade-btn { width: 91px; height: 27px; margin-left: 370px; border: 1px solid #a855e0; border-radius: 3px; background: #fff; color: #8a3fc4; font-size: 11.5px; font-weight: 500; display: flex; align-items: center; justify-content: center; gap: 5px; }
.gem { width: 14px; height: 14px; flex: none; }
.tn-i { margin-left: 16px; }
.tn-bell { margin-left: 10px; }
.avatar { width: 20px; height: 20px; border-radius: 50%; background: #5040a8; color: #e9e6ff; font-size: 9px; font-weight: 500; display: flex; align-items: center; justify-content: center; flex: none; margin-top: -4px; }
.tn-av { margin: 0 0 0 14px; }
.avatar-none { visibility: hidden; }

.workspace { flex: 1; min-height: 0; display: flex; }
.sidebar { width: 200px; flex: none; border-right: 1px solid #dfe1e6; padding-top: 10px; display: flex; flex-direction: column; font-size: 11.8px; }
.side-item { height: 26.6px; flex: none; display: flex; align-items: center; padding: 0 19px 0 16px; }
.side-text { margin-left: 7px; }
.side-chev { margin-left: auto; }
.side-plus { margin-left: auto; }
.side-dots { margin-left: 12px; font-weight: 700; font-size: 12px; letter-spacing: 0; }
.side-label { height: 27.6px; flex: none; display: flex; align-items: center; padding: 1px 0 0 25px; font-size: 9.5px; font-weight: 600; }
.side-project { height: 26px; flex: none; margin: 0 10px 0 20px; padding-left: 5px; display: flex; align-items: center; gap: 5px; background: #e9f2fe; border-radius: 3px; color: #1868db; position: relative; }
.side-project::before { content: ""; position: absolute; left: 0; top: 7px; width: 2px; height: 12px; background: #1868db; }
.proj-ic { width: 17px; height: 17px; flex: none; }
.side-sub { padding-left: 27px; height: 26.6px; }
.side-sub .side-text { margin-left: 6px; }
.side-gap { margin-top: 10px; }
.side-gap + .side-gap { margin-top: 11px; }
.goal-ic { width: 16px; height: 16px; margin-left: -1px; margin-right: -1px; flex: none; border-radius: 3px; background: radial-gradient(circle, #292a2e 0 2px, #e4e5e8 2px 3px, #292a2e 3px 5px, #e4e5e8 5px); }
.side-ext { margin-left: auto; }
.side-feedback { margin-top: auto; height: 48px; border-top: 1px solid #dfe1e6; display: flex; align-items: center; gap: 6px; padding-left: 21px; font-size: 11.5px; white-space: nowrap; }

/* main */
.main { flex: 1; min-width: 0; background: #e8f2ff; position: relative; }
.crumb { padding: 12px 0 0 20px; height: 30px; font-size: 11.5px; line-height: 16px; }
.title-row { height: 27px; display: flex; align-items: center; padding: 0 19px 0 20px; }
.title-ic { width: 17px; height: 17px; flex: none; }
.title { margin: -1px 0 0 6px; font-size: 16.5px; font-weight: 600; color: #292a2e; }
.sq-btn { width: 27px; height: 27px; margin-left: 6px; border: 1px solid #ccd3dc; border-radius: 3px; display: flex; align-items: center; justify-content: center; color: #505258; flex: none; }
.sq-narrow { width: 27px; margin-left: 0; }
.title-dots { margin-left: 10px; font-weight: 700; font-size: 14px; color: #292a2e; }
.title-actions { margin-left: auto; display: flex; gap: 6px; }
.tabs { height: 30px; display: flex; align-items: flex-start; gap: 14.4px; padding-left: 18px; border-bottom: 1px solid #c9d2dd; font-size: 11.8px; }
.jtab { height: 29px; display: flex; align-items: center; gap: 6px; padding: 5px 3px 0; border-bottom: 2px solid transparent; white-space: nowrap; }
.jtab-on { color: #1868db; border-bottom-color: #0c5ccf; }
.jtab-short { margin-left: 3px; }
.short-chev { margin-left: 2px; }
.tab-add { margin: 10px 0 0 0; }
.board-tools { height: 27px; margin-top: 19px; display: flex; align-items: center; padding: 0 19px 0 20px; }
.board-search { width: 152px; height: 27px; background: #fafbfc; border: 1px solid #ccd3dc; border-radius: 3px; display: flex; align-items: center; gap: 6px; padding-left: 6px; font-size: 12px; color: #6b6e76; }
.assignees { display: flex; margin-left: 8px; align-items: center; }
.av-ring { width: 24px; height: 24px; border-radius: 50%; background: #5040a8; border: 2px solid #b0322a; color: #e9e6ff; font-size: 9px; font-weight: 500; display: flex; align-items: center; justify-content: center; position: relative; z-index: 2; }
.av-m { position: absolute; right: -3px; bottom: -3px; width: 11px; height: 11px; border-radius: 2px; background: #c02a10; color: #fff; font-size: 9px; font-weight: 700; line-height: 11px; text-align: center; }
.av-blank { width: 24px; height: 24px; border-radius: 50%; background: #fff; margin-left: -7px; }
.filter-btn { width: 63px; height: 27px; margin-left: 5px; border: 1px solid #ccd3dc; border-radius: 3px; font-size: 11.5px; color: #292a2e; display: flex; align-items: center; justify-content: center; gap: 5px; font-weight: 500; }
.group-btn { width: 97px; height: 27px; margin-left: auto; background: #35373c; border: 1px solid #1868db; border-radius: 2px; color: #fff; font-size: 11.5px; font-weight: 600; }
.sq-tool { margin-left: 6px; }

.board { display: flex; align-items: flex-start; gap: 10px; padding: 34px 0 0 20px; }
.col { width: 225px; background: #f7f8f9; border-radius: 6px; padding-bottom: 4px; }
.col-head { height: 40px; display: flex; align-items: center; gap: 7px; padding: 0 0 2px 10px; font-size: 10px; font-weight: 500; color: #505258; }
.count { width: 20px; height: 13px; background: #dfe1e6; border-radius: 2px; text-align: center; line-height: 13px; font-size: 10px; color: #505258; }
.cards { display: flex; flex-direction: column; gap: 3px; padding: 0 3px; }
.card { background: #fff; border-radius: 4px; box-shadow: 0 1px 1px rgba(30, 31, 33, .35), 0 0 1px rgba(30, 31, 33, .25); padding: 7px 12px 0 10.5px; display: flex; flex-direction: column; flex: none; }
.card-3l { height: 99px; padding-bottom: 12px; }
.card-2l { height: 82px; padding-bottom: 11px; }
.card-1l { height: 63.5px; padding-bottom: 6px; }
.card-1t { height: 75px; padding-bottom: 11px; }
.card-title { font-size: 11.7px; line-height: 16.6px; color: #46484e; }
.card-foot { margin-top: auto; height: 20px; display: flex; align-items: center; }
.task { width: 13px; height: 13px; flex: none; }
.key { margin-left: 6px; font-size: 10px; font-weight: 500; color: #505258; }
.prio { display: block; width: 11px; height: 6px; margin-left: auto; border-top: 2px solid #e56910; border-bottom: 2px solid #e56910; flex: none; }
.prio + .avatar { margin-left: 6px; }
.done { width: 10px; height: 10px; margin-left: auto; fill: none; stroke: #6a9a23; stroke-width: 1.8; flex: none; }
.prio-d { margin-left: 5px; }
.col-create { height: 30px; display: flex; align-items: center; gap: 6px; padding: 5px 0 0 9px; font-size: 11.5px; font-weight: 500; }
.quickstart { position: absolute; right: 19px; bottom: 20px; width: 139px; height: 33px; border-radius: 17px; background: #9b46be; color: #fbe9ff; display: flex; align-items: center; padding-left: 14px; gap: 6px; font-size: 13px; font-weight: 600; box-shadow: 0 4px 8px rgba(30, 31, 33, .15); }
.ic-qs { color: #fbe9ff; }
.qs-close { width: 22px; height: 22px; border-radius: 50%; background: #b355de; margin-left: auto; margin-right: 8px; display: flex; align-items: center; justify-content: center; box-shadow: 0 0 0 2px #8d3fb0; }

/* taskbar */
.taskbar { height: 59px; flex: none; background: #1d2022; border-top: 1px solid #3a3d3f; display: grid; grid-template-columns: 695px auto 1fr; align-items: center; color: #fff; font-family: "Open Sans", "Noto Sans", sans-serif; }
.tb-left { display: flex; align-items: center; padding-left: 25px; }
.weather { width: 32px; height: 42px; position: relative; }
.weather-ic { width: 32px; height: 42px; }
.weather-badge { position: absolute; left: 14px; top: 0; width: 19px; height: 19px; border-radius: 50%; background: #ff9aa8; color: #111; font-size: 12px; text-align: center; line-height: 19px; }
.weather-text { display: flex; flex-direction: column; margin-left: 7px; font-size: 14px; line-height: 20px; }
.weather-sub { color: #d0d0d0; }
.tb-center { display: flex; align-items: center; }
.win-logo { width: 29px; height: 29px; flex: none; }
.tb-search { width: 275px; height: 40px; margin-left: 17px; border-radius: 20px; background: #3a4040; border: 1px solid #4a5050; display: flex; align-items: center; padding-left: 14px; font-size: 16px; color: #e0e0e0; position: relative; }
.ic-tb { color: #ddd; stroke-width: 1.8; }
.tb-search span { margin-left: 12px; }
.lavender { position: absolute; right: 8px; bottom: 0; width: 54px; height: 34px; }
.tb-app { flex: none; }
.tb-view { width: 30px; height: 28px; margin-left: 15px; }
.tb-files { width: 30px; height: 26px; margin-left: 25px; }
.tb-store { width: 29px; height: 30px; margin-left: 25px; }
.tb-chrome { width: 49px; height: 50px; margin-left: 16px; border-radius: 4px; background: #2a2e30; display: flex; flex-direction: column; align-items: center; padding-top: 9px; position: relative; }
.chrome-logo { width: 30px; height: 30px; }
.chrome-ind { position: absolute; bottom: 1px; width: 20px; height: 4px; border-radius: 2px; background: #d8a0e0; }
.tb-right { display: flex; align-items: center; justify-content: flex-end; padding-right: 24px; }
.ic-tbw { color: #fff; }
.tray-up { transform: rotate(180deg); margin-right: 23px; }
.tray { margin-right: 10px; }
.clock { display: flex; flex-direction: column; align-items: flex-end; margin-left: 11px; font-size: 14px; line-height: 20px; }
```
